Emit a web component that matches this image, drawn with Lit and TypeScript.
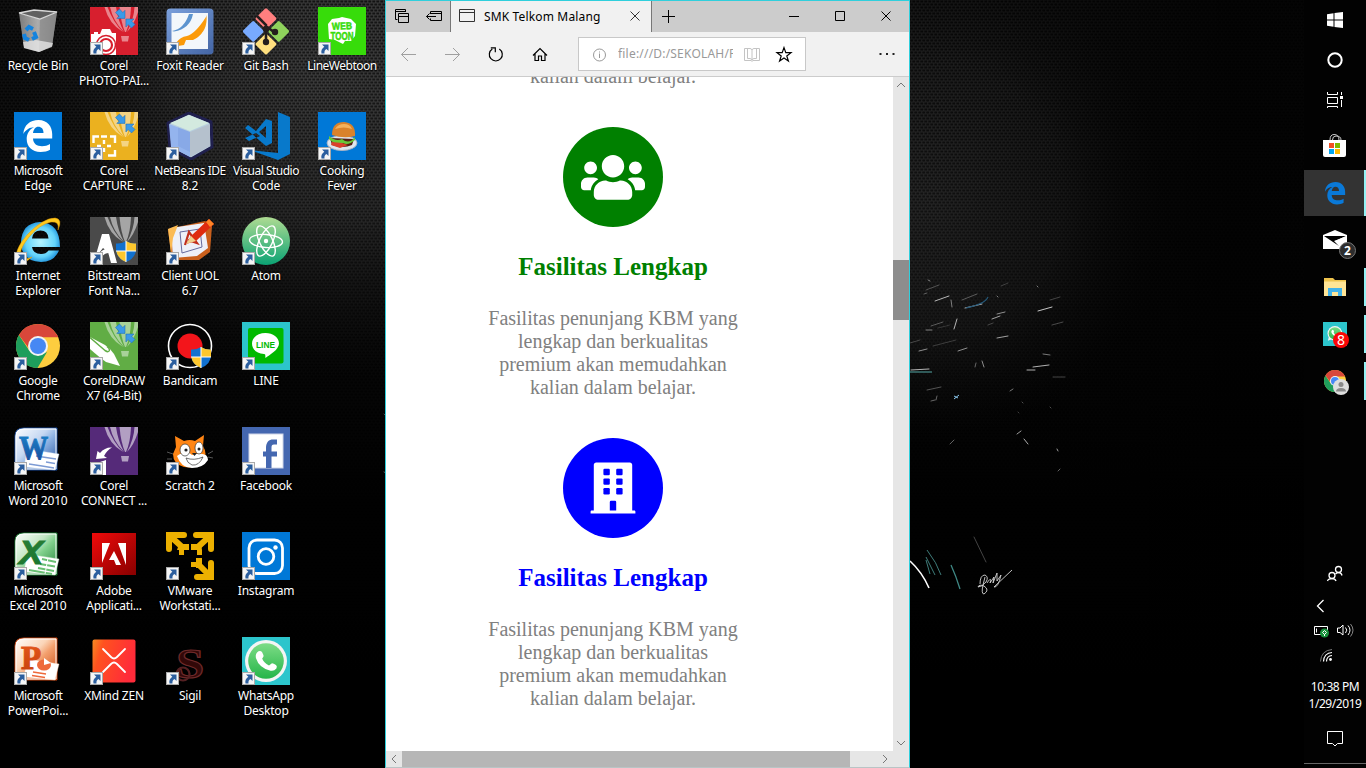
import { LitElement, html, svg, css, TemplateResult } from "lit";
import { customElement, property } from "lit/decorators.js";

const EDGE =
  "M9.3 22C10 13 16 8 24.5 8C33.5 8 38.2 14.5 38.2 22V26.5H19C19.3 32 23 34.2 28 34.2C31 34.2 33.5 33.5 36 32V37.8C33.5 39.2 30.5 40 26.5 40C18 40 12.7 34.5 12.7 27C12.7 22 15 17.5 20 15.2C15.5 15.2 11.5 18 9.3 22ZM19 21H29.5C29.5 17 27.5 14.8 24.2 14.8C21.5 14.8 19.5 17.5 19 21Z";

/* ---------- shared icon parts ---------- */

const tile = (color: string) => svg`<rect width="48" height="48" fill=${color} />`;

const balloon = (color: string, opacity = 0.5) => svg`
  <g fill=${color} fill-opacity=${opacity}>
    <path d="M14.5 0H17.5Q23 15 33 25Q19 17 14.5 0Z" />
    <path d="M20 0H26Q28 14 34 25Q23 14 20 0Z" />
    <path d="M29.5 0H41Q40.5 15 36 25H35Q31 16 29.5 0Z" />
    <path d="M44.5 0H48V5Q44 18 37 25Q44 12 44.5 0Z" />
    <path d="M31 29H39L38 34.5H32Z" />
  </g>`;

const compressArrows = svg`
  <g fill="#3a9ae8" stroke="#1669b5" stroke-width=".5">
    <path d="M25.500 5.500L29.500 2L32.800 5.500L35 3.300V11.400H26.800L29 9.200Z" />
    <path d="M45 17.500L41.500 21L38.200 17.600L35.900 20V12H44L41.700 14.200Z" />
  </g>`;

const shield = (x: number, y: number) => svg`
  <g transform="translate(${x} ${y})">
    <path d="M10 0Q15 3 20 2.500V8Q20 17 10 21Q0 17 0 8V2.500Q5 3 10 0Z" fill="#1171cf" />
    <path d="M10 0Q15 3 20 2.500V10H10ZM10 10V21Q1.500 17.500 .3 10Z" fill="#fdc72e" />
    <path d="M10 0V21M0 10H20" stroke="#fff" stroke-width="1" fill="none" />
  </g>`;

const chromeMark = svg`
  <circle cx="24" cy="24" r="22" fill="#fdcd3f" />
  <path d="M4.9 13A22 22 0 0 0 23.5 46L33 30L24 33.5L15.2 28.5Z" fill="#1e9e5c" />
  <path d="M4.9 13A22 22 0 0 1 43.1 13Q44 14 44.2 15.2H24L14.6 26Z" fill="#d8473a" />
  <circle cx="24" cy="24" r="10" fill="#f3f3f3" />
  <circle cx="24" cy="24" r="8" fill="#4688f4" />`;

const whatsMark = svg`
  <circle cx="24" cy="24" r="21" fill="#f4f5f4" />
  <path d="M4 45L7 33L15 41Z" fill="#f4f5f4" />
  <circle cx="24" cy="24" r="17.8" fill="url(#wa)" />
  <path d="M16.5 14.3Q18.5 13.2 20 15L21.5 18.3Q22 19.5 20.2 21.5Q21.5 25.5 27 28.5L29.6 26.4Q31 26 34 28Q35.5 29 34.4 31.5Q32 34.5 28.5 33.7Q17 31 13.9 21Q13 16.5 16.5 14.3Z" fill="#fff" />`;

const whatsGradient = svg`
  <linearGradient id="wa" x2="0" y2="1"><stop offset="0" stop-color="#7ddc86" /><stop offset="1" stop-color="#25b549" /></linearGradient>`;

const office = (id: string, c1: string, c2: string, c3: string, letter: string, ink: string, deco: TemplateResult) => svg`
  <linearGradient id=${id} x2="1" y2="1"><stop offset="0" stop-color="#fff" /><stop offset=".4" stop-color=${c2} /><stop offset=".55" stop-color=${c1} /><stop offset="1" stop-color=${c3} /></linearGradient>
  <linearGradient id=${id + "t"} x2="0" y2="1"><stop offset="0" stop-color=${ink} /><stop offset="1" stop-color=${c3} /></linearGradient>
  <path d="M1 9Q1 1 10 1H43V43H1Z" fill="url(#${id})" stroke=${c3} stroke-width="1" />
  <path d="M2 9.500Q2 2 10 2H42V42H2Z" fill="none" stroke="#fff" stroke-width="1" />
  <path d="M13 22L45 27L41 43L10 40Z" fill="#fff" stroke=${c2} stroke-width=".4" />
  ${deco}
  <text x=${letter === "P" ? 7 : 5} y="31.500" class=${letter === "X" ? "slant" : "heavy"} font-size="34" textLength=${letter === "P" ? 20 : letter === "W" ? 29 : 24} lengthAdjust="spacingAndGlyphs" fill="url(#${id + "t"})" stroke="url(#${id + "t"})" stroke-width="1">${letter}</text>`;

/* ---------- desktop icon art, 48 x 48 ---------- */

const art: Record<string, TemplateResult> = {
  recycle: svg`
    <linearGradient id="rb"><stop offset="0" stop-color="#8f8f8f" /><stop offset=".5" stop-color="#c9c9c9" /><stop offset="1" stop-color="#8a8a8a" /></linearGradient>
    <path d="M5 6L26 12L43 5L38 39L25 45L10 41Z" fill="url(#rb)" fill-opacity=".85" />
    <path d="M26 12L43 5L38 39L25 45Z" fill="#8c8c8c" fill-opacity=".75" />
    <path d="M5 6L20 3L43 5L26 12Z" fill="#606060" stroke="#d8d8d8" stroke-width="1.3" />
    <path d="M9 35L22 33L39 36L38 40L25 45L10 41Z" fill="#f0f0f0" fill-opacity=".7" />
    <g fill="none" stroke="#1583dd" stroke-width="4"><path d="M12 23L15 20L19 22" /><path d="M20 25L22 30L18 32" /><path d="M10 27L11 31L15 33" /></g>`,
  edge: svg`${tile("#0078d7")}<path d=${EDGE} fill="#fff" />`,
  ie: svg`
    <radialGradient id="ieg"><stop offset="0" stop-color="#b5f4ff" /><stop offset=".75" stop-color="#63d3fa" /><stop offset="1" stop-color="#2c9de0" /></radialGradient>
    <path d="M46 30H18Q19 37 27 37Q32 37 34.5 33.5H45Q40 45 27 45Q7 44 7 25Q8 6 26 5Q46 6 46 30ZM18 21.5H34.5Q34 13.5 26.5 13.5Q19 13.5 18 21.5Z" fill="url(#ieg)" />
    <path d="M3 44Q-1 34 13 18Q29 1 41 1Q49 2 44 13Q46 4 37 5Q26 7 15 20Q2 36 9 41Q12 43 18 40Q8 49 3 44Z" fill="#ffc91f" stroke="#e39a00" stroke-width=".5" />`,
  chrome: chromeMark,
  word: office("wd", "#8fb3e3", "#c6d8f2", "#184999", "W", "#1c8ad0", svg`<path d="M22 29L42 32M32 35L41 36.500M15 37L28 39M28 39L40 41" stroke="#7d9bd4" stroke-width="1.4" />`),
  excel: office("xl", "#7fd08b", "#c2e6c4", "#19772f", "X", "#2a7d36", svg`<path d="M28 27L42 30M26 32L41 34.500M24 36L40 39M15 38L38 42" stroke="#69bf73" stroke-width="2" /><path d="M34 26L31 42" stroke="#fff" stroke-width="1" />`),
  ppt: office("pp", "#f3a06e", "#fbd5b8", "#c5400b", "P", "#e8591c", svg`<ellipse cx="30" cy="28" rx="7" ry="5.500" fill="#ee6a3b" /><path d="M30 28V21L37 26Z" fill="#fff" /><path d="M19 35L32 37M18 38.500L31 40.500" stroke="#ee6a3b" stroke-width="1.6" />`),
  photo: svg`${tile("#d71f2e")}${balloon("#fff", 0.45)}${compressArrows}
    <path d="M1 27H4V25H8V27H10L12 22H20L22 26H26V48H1Z" fill="#fff" />
    <circle cx="16" cy="38" r="9.500" fill="#fff" stroke="#d71f2e" stroke-width="1.600" /><circle cx="16" cy="38" r="6" fill="none" stroke="#d71f2e" stroke-width="2.200" />`,
  capture: svg`${tile("#ebb11f")}${balloon("#fff", 0.45)}${compressArrows}
    <path d="M3.500 31V24.500H9M20 24.500H25V31M25 38V43.500H18M11 24.500H17M14 28V32M14 36V40M7 34H11M17 34H21" fill="none" stroke="#fff" stroke-width="2.400" />`,
  bitstream: svg`${tile("#4a4a4a")}${balloon("#fff", 0.5)}
    <path d="M5 41L12 17H19L27 46H21L18 35L13 31Z" fill="#fff" /><path d="M3 44Q10 32 19 31V36Q12 36 11 44Z" fill="#fff" />${shield(26, 24)}`,
  coreldraw: svg`${tile("#61ad45")}${balloon("#fff", 0.45)}${compressArrows}
    <path d="M0 15L15 23Q21 27 24 32L30 44L16 40Q9 35 0 27Z" fill="#fff" /><path d="M0 15.500L15 28.500Q19 31 19.500 28Q19.500 26.500 17 24.500" fill="none" stroke="#61ad45" stroke-width="1.500" />`,
  connect: svg`${tile("#552a79")}${balloon("#fff", 0.55)}
    <path d="M6 32L7.500 24L10 26Q15 20 22 20.500Q17 23 14 29L17 31Z" fill="#fff" /><path d="M10 35L16 33V48H10Z" fill="#fff" />`,
  adobe: svg`
    <linearGradient id="ad" x2="1" y2="1"><stop offset="0" stop-color="#f00a0a" /><stop offset="1" stop-color="#800" /></linearGradient>
    <rect x="2" y="1" width="44" height="42" fill="url(#ad)" /><path d="M12 11H20L12 31ZM28 11H36V33ZM24 19L31 33H26L24 28H19Z" fill="#fff" />`,
  xmind: svg`
    <linearGradient id="xm" x2="1" y2=".3"><stop offset="0" stop-color="#f68b22" /><stop offset=".25" stop-color="#ff521f" /><stop offset="1" stop-color="#ff2b3a" /></linearGradient>
    <rect x="2.500" y="2.500" width="43" height="43" rx="2" fill="url(#xm)" />
    <path d="M13 12L21 20Q24 23 27 20L35 12M13 35L21 27Q24 24 27 27L35 35" fill="none" stroke="#fff" stroke-width="1.800" stroke-linecap="round" />`,
  foxit: svg`
    <linearGradient id="fx" x2="1" y2="1"><stop offset="0" stop-color="#7ba0dc" /><stop offset="1" stop-color="#4365a5" /></linearGradient>
    <rect x=".5" y="1.500" width="47" height="46" rx="4" fill="url(#fx)" /><rect x="5.500" y="6" width="36.500" height="36" fill="#f3f7fb" />
    <path d="M6 24Q18 22 23 7H27Q24 22 8 24.500Z" fill="#5d94cf" /><path d="M28 30Q38 23 40.500 8Q42 24 30 31Z" fill="#f7a014" /><path d="M10 36Q14 30 21 29Q29 27 40 10Q39 28 27 33L20 33L18 38L12 39Z" fill="#fb9a0a" />`,
  netbeans: svg`
    <path d="M23 1L45 10L46 35L25 47L4 36L2 11Z" fill="#b8cfdf" stroke="#20204e" stroke-width="3" stroke-linejoin="round" />
    <path d="M3 12L24 20V45L5 35Z" fill="#94b4ee" /><path d="M24 20L44 12V34L24 45Z" fill="#b5c1cd" /><path d="M4 11L23 3L43 11L24 19Z" fill="#d3eadf" /><path d="M12 15.500L24 20V40L12 34Z" fill="#7599dd" fill-opacity=".4" />`,
  uol: svg`
    <path d="M2 12L39 4L46 9L44 35L33 43L6 43Z" fill="#c95f1c" /><path d="M5 11L38 6L42 31L31 39L7 41Z" fill="#eef0f8" /><path d="M2 12L12 8L7 21L5 37Z" fill="#fbbb54" />
    <path d="M14 15L34 12L36 30L16 36Z" fill="none" stroke="#666b9e" stroke-width="1" /><path d="M19 28L23 15L31 26L22 23" fill="none" stroke="#c02f1d" stroke-width="2.200" />
    <path d="M25 19L43 2L48 7L30 24L20 27Z" fill="#df2b0f" /><path d="M40 5L43 2L48 7L44 10Z" fill="#ff8426" /><path d="M25 19L30 24L20 27Z" fill="#efcf8c" />`,
  bandicam: svg`
    <circle cx="24" cy="24" r="21.500" fill="#050505" stroke="#fff" stroke-width="1.600" /><circle cx="24" cy="24" r="12.500" fill="#f3151b" />${shield(25, 25)}`,
  scratch: svg`
    <path d="M10 20L9 9L18 14Q24 12 29 14L38 8L37 19Q42 27 37 34Q31 42 18 40Q7 37 7 27Z" fill="#ff8514" />
    <path d="M11 29Q21 22 26 28Q42 24 42 33Q37 41 26 41Q15 41 11 29Z" fill="#fff" />
    <ellipse cx="19" cy="23" rx="5" ry="6" fill="#fff" stroke="#333" stroke-width=".7" /><ellipse cx="33" cy="21" rx="4" ry="6" fill="#fff" stroke="#333" stroke-width=".7" />
    <circle cx="20" cy="23" r="1.600" fill="#222" /><circle cx="33" cy="22" r="1.500" fill="#222" /><path d="M26 26H31L28.500 29Z" fill="#222" />
    <path d="M20 31Q28 34 37 30Q33 39 26 38Q21 36 20 31Z" fill="#fff" stroke="#333" stroke-width=".7" /><path d="M1 25L7 27M1 32H6M47 24L42 27M47 31L42 30" stroke="#555" />`,
  vmware: svg`<g fill="none" stroke="#ecb000" stroke-linecap="round" stroke-width="6">
      <path d="M3 17V3H18M3 3L15 14M45 17V3H30M45 3L33 14M45 31V45H31M45 45L33 33" /></g>
    <path d="M13 12H23V18H18V23H13V18H11ZM25 12H35L36 18V23H31V18H25ZM25 30H30V26H36V36H30V35H25Z" fill="#ecb000" />`,
  sigil: svg`<text x="10" y="41" class="ornate" font-size="42" textLength="28" lengthAdjust="spacingAndGlyphs" fill="#320808" stroke="#6e2a2a" stroke-width="1.100">S</text>
    <circle cx="17" cy="37" r="6.500" fill="none" stroke="#552022" stroke-width="2.200" />`,
  git: svg`
    <g transform="rotate(45 24 24)"><rect x="7.500" y="7.500" width="15.500" height="15.500" rx="1.500" fill="#ff7f7f" /><rect x="25.500" y="7.500" width="15.500" height="15.500" rx="1.500" fill="#8fd35c" /><rect x="7.500" y="25.500" width="15.500" height="15.500" rx="1.500" fill="#78aaff" /><rect x="25.500" y="25.500" width="15.500" height="15.500" rx="1.500" fill="#ffe07f" /></g>
    <path d="M15 9L24 18V34M25 20L32 25" fill="none" stroke="#231d1d" stroke-width="2.600" /><circle cx="24" cy="22" r="3.200" fill="#231d1d" /><circle cx="33" cy="25" r="3.200" fill="#231d1d" /><circle cx="24" cy="35" r="3.200" fill="#231d1d" />`,
  vscode: svg`<g fill="#0879cb"><path d="M36 0L48 5V42L36 48L8 38L36 41Z" /><path fill-rule="evenodd" d="M24 7L30 9V31L24 34L3 16L6 13L14 19ZM24 14L17 20L24 26ZM14 21L18 24L7 29L3 26Z" /></g>`,
  atom: svg`
    <linearGradient id="at" x2="0" y2="1"><stop offset="0" stop-color="#aedb92" /><stop offset="1" stop-color="#0ba374" /></linearGradient>
    <circle cx="24" cy="24" r="24" fill="url(#at)" /><g fill="none" stroke="#fff" stroke-width="1.400"><ellipse cx="24" cy="24" rx="16.500" ry="6.500" transform="rotate(4 24 24)" /><ellipse cx="24" cy="24" rx="16.500" ry="6.500" transform="rotate(64 24 24)" /><ellipse cx="24" cy="24" rx="16.500" ry="6.500" transform="rotate(116 24 24)" /></g><circle cx="24" cy="24" r="2.200" fill="#fff" />`,
  line: svg`${tile("#2cc5cc")}<rect x="6" y="6" width="35.500" height="35.500" rx="2" fill="#00b900" />
    <path d="M23.500 11C31 11 37 15.500 37 21.500C37 28 27 33 23.500 36C23 34 24 32 22 32C14 31 10 27 10 21.500C10 15.500 16 11 23.500 11Z" fill="#fff" />
    <text x="14" y="25.500" class="bold" font-size="9" textLength="19" lengthAdjust="spacingAndGlyphs" fill="#00b900">LINE</text>`,
  facebook: svg`${tile("#4467b0")}<rect x="7" y="7" width="34" height="34" fill="#fff" /><rect x="7" y="7" width="34" height="34" fill="none" stroke="#cfd6e8" />
    <path d="M24 41V29.500H21V24.500H24V21C24 15 27 12.500 31 12.500H35V17.500H32C30 17.500 29.500 18.500 29.500 20.500V24.500H35V29.500H29.500V41Z" fill="#4467b0" />`,
  instagram: svg`${tile("#0078d7")}<rect x="7" y="8" width="33.500" height="33.500" rx="8" fill="none" stroke="#fff" stroke-width="2.800" /><circle cx="24" cy="24.500" r="7.800" fill="none" stroke="#fff" stroke-width="2.800" /><circle cx="33.500" cy="15.500" r="2.200" fill="#fff" />`,
  whatsapp: svg`${whatsGradient}${tile("#2cc5cc")}${whatsMark}`,
  webtoon: svg`${tile("#37dc0a")}
    <path d="M14 12L21 11L24 10L33 12L38 17L37 29L33 34L27 34L25 37L17 33L11 32L10 17Z" fill="#fff" />
    <g class="bold" fill="#37dc0a" stroke="#37dc0a" stroke-width=".5"><text x="14" y="22.500" font-size="10" textLength="20" lengthAdjust="spacingAndGlyphs" transform="rotate(-2 24 20)">WEB</text><text x="12.500" y="32.500" font-size="10.500" textLength="23" lengthAdjust="spacingAndGlyphs">TOON</text></g>`,
  cooking: svg`${tile("#0078d7")}
    <ellipse cx="24" cy="31" rx="15" ry="7.500" fill="#dfe6ee" stroke="#a8b3c6" /><path d="M12 26L36 27L34 33Q25 37 14 33Z" fill="#542016" />
    <path d="M11 24Q18 30 24 27Q31 33 37 25L37 28Q30 34 25 31Q18 34 11 27Z" fill="#68c738" /><path d="M14 30L24 31L30 33L22 36L13 33Z" fill="#d9412b" />
    <path d="M14 23Q14 10 26 10Q38 11 37 24Q26 27 14 23Z" fill="#d9822b" /><path d="M17 17Q20 12 26 12Q32 12 34 17Q26 14 17 17Z" fill="#f3b15d" />`,
};

interface Shortcut {
  icon: string;
  lines: string[];
  plain?: boolean;
}

const columns: Shortcut[][] = [
  [
    { icon: "recycle", lines: ["Recycle Bin"], plain: true },
    { icon: "edge", lines: ["Microsoft", "Edge"] },
    { icon: "ie", lines: ["Internet", "Explorer"] },
    { icon: "chrome", lines: ["Google", "Chrome"] },
    { icon: "word", lines: ["Microsoft", "Word 2010"] },
    { icon: "excel", lines: ["Microsoft", "Excel 2010"] },
    { icon: "ppt", lines: ["Microsoft", "PowerPoi..."] },
  ],
  [
    { icon: "photo", lines: ["Corel", "PHOTO-PAI..."] },
    { icon: "capture", lines: ["Corel", "CAPTURE ..."] },
    { icon: "bitstream", lines: ["Bitstream", "Font Na..."] },
    { icon: "coreldraw", lines: ["CorelDRAW", "X7 (64-Bit)"] },
    { icon: "connect", lines: ["Corel", "CONNECT ..."] },
    { icon: "adobe", lines: ["Adobe", "Applicati..."] },
    { icon: "xmind", lines: ["XMind ZEN"] },
  ],
  [
    { icon: "foxit", lines: ["Foxit Reader"] },
    { icon: "netbeans", lines: ["NetBeans IDE", "8.2"] },
    { icon: "uol", lines: ["Client UOL", "6.7"] },
    { icon: "bandicam", lines: ["Bandicam"] },
    { icon: "scratch", lines: ["Scratch 2"] },
    { icon: "vmware", lines: ["VMware", "Workstati..."] },
    { icon: "sigil", lines: ["Sigil"] },
  ],
  [
    { icon: "git", lines: ["Git Bash"] },
    { icon: "vscode", lines: ["Visual Studio", "Code"] },
    { icon: "atom", lines: ["Atom"] },
    { icon: "line", lines: ["LINE"] },
    { icon: "facebook", lines: ["Facebook"] },
    { icon: "instagram", lines: ["Instagram"] },
    { icon: "whatsapp", lines: ["WhatsApp", "Desktop"] },
  ],
  [
    { icon: "webtoon", lines: ["LineWebtoon"] },
    { icon: "cooking", lines: ["Cooking", "Fever"] },
  ],
];

const tight = new Set(["NetBeans IDE", "Visual Studio", "LineWebtoon", "Microsoft"]);

@customElement("desktop-icons")
export class DesktopIcons extends LitElement {
  static styles = css`
    :host { display: flex; font: 12px/15px "Noto Sans", "Open Sans", sans-serif; letter-spacing: -0.22px; color: #fff; }
    .column { width: 76px; display: flex; flex-direction: column; }
    .cell { height: 105px; box-sizing: border-box; padding-top: 7px; display: flex; flex-direction: column; align-items: center; }
    .art { width: 48px; height: 48px; display: block; margin-bottom: 3px; }
    .label { white-space: nowrap; text-shadow: 0 1px 2px #000, 0 0 2px #000; }
    .tight { letter-spacing: -0.5px; }
    .heavy { font-family: "Liberation Serif", serif; font-weight: bold; }
    .slant { font-family: "Liberation Sans", sans-serif; font-weight: bold; font-style: italic; }
    .bold { font-family: "Liberation Sans", sans-serif; font-weight: bold; letter-spacing: 0; }
    .ornate { font-family: "Liberation Serif", serif; font-weight: bold; }
  `;

  render() {
    return columns.map(
      (items) => html`<div class="column">
        ${items.map(
          (item) => html`<div class="cell">
            <svg class="art" viewBox="0 0 48 48">
              ${art[item.icon]}
              ${item.plain
                ? null
                : svg`<rect x=".5" y="35.500" width="12" height="12" fill="#f5f5f5" stroke="#a9a9a9" />
                    <path d="M4 37.500H10.500V44L8.500 42Q6 43 6.500 46.500H3.500Q2.500 42.500 6.300 39.800Z" fill="#2b5e9e" />`}
            </svg>
            ${item.lines.map((line) => html`<span class="label ${tight.has(line) ? "tight" : ""}">${line}</span>`)}
          </div>`
        )}
      </div>`
    );
  }
}

/* ---------- web page shown in the browser ---------- */

@customElement("facility-card")
export class FacilityCard extends LitElement {
  @property() color = "green";
  @property() icon = "";

  static styles = css`
    :host { display: flex; flex-direction: column; align-items: center; height: 311px; font: 20px/23px "Liberation Serif", serif; text-align: center; color: gray; }
    .disc { width: 100px; height: 100px; border-radius: 50%; }
    .disc.green { background: green; }
    .disc.blue { background: blue; }
    .title { font-size: 25px; line-height: 29px; font-weight: bold; margin: 25px 0 26px; white-space: nowrap; }
    .title.green { color: green; }
    .title.blue { color: blue; }
    .text { white-space: pre-line; margin: 0; }
    svg { display: block; }
  `;

  render() {
    return html`<div class="disc ${this.color}">
        <svg viewBox="0 0 1000 1000">
          ${this.icon === "users"
            ? svg`<path transform="translate(180 248)" fill="#fff" d="M96 224c35.300 0 64-28.700 64-64s-28.700-64-64-64-64 28.700-64 64 28.700 64 64 64zm448 0c35.300 0 64-28.700 64-64s-28.700-64-64-64-64 28.700-64 64 28.700 64 64 64zm32 32h-64c-17.600 0-33.500 7.100-45.100 18.600 40.300 22.100 68.900 62 75.100 109.400h66c17.700 0 32-14.300 32-32v-32c0-35.300-28.700-64-64-64zm-256 0c61.900 0 112-50.100 112-112S381.900 32 320 32 208 82.100 208 144s50.100 112 112 112zm76.800 32h-8.300c-20.800 10-43.900 16-68.500 16s-47.600-6-68.500-16h-8.300C179.600 288 128 339.600 128 403.200V432c0 26.500 21.500 48 48 48h288c26.500 0 48-21.500 48-48v-28.800c0-63.600-51.600-115.200-115.200-115.200zm-223.700-13.400C161.500 263.100 145.600 256 128 256H64c-35.300 0-64 28.700-64 64v32c0 17.700 14.300 32 32 32h65.900c6.300-47.400 34.900-87.300 75.200-109.400z" />`
            : svg`<g transform="translate(276 244)">
                <path fill="#fff" d="M436 480h-20V24c0-13-11-24-24-24H56C43 0 32 11 32 24v456H12c-7 0-12 5-12 12v20h448v-20c0-7-5-12-12-12z" />
                <g fill="blue">${[64, 160, 256].map((y) => svg`<rect x="128" y=${y} width="64" height="64" rx="12" /><rect x="256" y=${y} width="64" height="64" rx="12" />`)}
                <path d="M192 480V396q0-12 12-12h40q12 0 12 12v84z" /></g></g>`}
        </svg>
      </div>
      <h2 class="title ${this.color}">Fasilitas Lengkap</h2>
      <p class="text">Fasilitas penunjang KBM yang
lengkap dan berkualitas
premium akan memudahkan
kalian dalam belajar.</p>`;
  }
}

@customElement("browser-window")
export class BrowserWindow extends LitElement {
  static styles = css`
    :host { display: flex; flex-direction: column; box-sizing: border-box; border: 1px solid #2fcfdc; border-bottom-color: #b9c4c5; background: #f1f1f1; font: 12px/16px "Noto Sans", "Open Sans", sans-serif; color: #000; overflow: hidden; }
    svg { display: block; fill: none; stroke: currentColor; flex: none; }
    .tabs { height: 31px; background: #ccc; display: flex; }
    .set-aside { width: 64px; display: flex; align-items: center; }
    .tab { width: 202px; box-sizing: border-box; border-left: 1px solid #777; border-right: 1px solid #777; background: #f1f1f1; display: flex; align-items: center; }
    .tab-title { flex: 1; padding-left: 8px; letter-spacing: 0.15px; white-space: nowrap; }
    .spacer { flex: 1; }
    .tools { height: 44px; display: flex; align-items: center; border-bottom: 1px solid #ccc; }
    .address { width: 228px; height: 34px; margin-left: 26px; box-sizing: border-box; border: 1px solid #c8c8c8; background: #fff; display: flex; align-items: center; }
    .url { width: 115px; margin: 0 2px 0 11px; overflow: hidden; white-space: nowrap; color: #999; letter-spacing: 0.2px; }
    .view { flex: 1; display: flex; min-height: 0; }
    .page { flex: 1; background: #fff; overflow: hidden; display: flex; flex-direction: column; }
    .cards { width: 454px; flex: none; }
    .scrolled { margin: -12px 0 39px; font: 20px/23px "Liberation Serif", serif; color: gray; text-align: center; }
    .vbar { width: 16px; background: #e6e6e6; color: #777; display: flex; flex-direction: column; }
    .vtrack { flex: 1; padding-top: 167px; }
    .vthumb { height: 60px; background: #8d8d8d; }
    .hbar { height: 16px; background: #e6e6e6; color: #777; display: flex; padding-right: 16px; }
    .htrack { flex: 1; }
    .hthumb { width: 448px; height: 16px; background: #b6b6b6; }
  `;

  render() {
    return html`
      <div class="tabs">
        <div class="set-aside">
          <svg width="64" height="31" viewBox="386 1 64 31">
            <path d="M397.500 19.500H395.500V9.500H405.500V12M395.500 11.500H405.500M398.500 13.500H408.500V22.500H398.500ZM398.500 16.500H408.500" />
            <path d="M430.500 14V11.500H441.500V20.500H430.500V18.500M430 13.500H441.500M426.500 16.500H436M429.500 13.500L426.500 16.500L429.500 19.500" />
          </svg>
        </div>
        <div class="tab">
          <svg width="25" height="31" viewBox="451 1 25 31" color="#333"><path d="M459.500 9.500H474.500V21.500H459.500ZM459.500 12.500H474.500" /></svg>
          <span class="tab-title">SMK Telkom Malang</span>
          <svg width="21" height="31" viewBox="630 1 21 31" color="#333"><path d="M630.500 11.500L639.500 20.500M639.500 11.500L630.500 20.500" /></svg>
        </div>
        <svg width="36" height="31" viewBox="652 1 36 31"><path d="M668.500 10V23M662 16.500H675" /></svg>
        <div class="spacer"></div>
        <svg width="129" height="31" viewBox="780 1 129 31"><path d="M789 16.500H799M835.500 11.500H844.500V20.500H835.500ZM881.500 11.500L890.500 20.500M890.500 11.500L881.500 20.500" /></svg>
      </div>
      <div class="tools">
        <svg width="166" height="44" viewBox="386 32 166 44">
          <path d="M401.500 54.500H416M408 48L401.500 54.500L408 61M445 54.500H459.500M453 48L459.500 54.500L453 61" stroke="#a0a0a0" />
          <path d="M499.500 48.700A6.500 6.500 0 1 1 492.500 48.700M491 47.500H495.500V52" stroke-width="1.200" transform="translate(-.2 .3)" />
          <path d="M533 55.500L540 48.500L547 55.500M535 54V60.500H538.500V56H541.500V60.500H545V54" stroke-width="1.200" />
        </svg>
        <div class="address">
          <svg width="28" height="32" viewBox="579 38 28 32" color="#999"><circle cx="599.500" cy="55" r="6" /><path d="M599.500 53.500V58M599.500 51.500V52.500" /></svg>
          <span class="url">file:///D:/SEKOLAH/F</span>
          <svg width="70" height="32" viewBox="735 38 70 32">
            <path d="M744.500 48.500H750Q751.500 48.500 752 50Q752.500 48.500 754 48.500H759.500V60.500H753L752 61.500L751 60.500H744.500ZM752 50V61M747.500 48.500V58.500H750Q752 59 752 60M756.500 48.500V58.500H754Q752 59 752 60" stroke="#c4c4c4" />
            <path d="M784 47.600L785.800 52.700H791L786.800 56L788.400 61L784 58L779.600 61L781.200 56L777 52.700H782.200Z" stroke-width="1.200" />
          </svg>
        </div>
        <div class="spacer"></div>
        <svg width="40" height="44" viewBox="869 32 40 44"><path d="M879.500 54H881.500M886 54H888M892.500 54H894.500" stroke-width="2" stroke="#222" /></svg>
      </div>
      <div class="view">
        <div class="page">
          <div class="cards">
            <p class="scrolled">kalian dalam belajar.</p>
            <facility-card color="green" icon="users"></facility-card>
            <facility-card color="blue" icon="building"></facility-card>
          </div>
        </div>
        <div class="vbar">
          <svg width="16" height="16"><path d="M4 10L8 6L12 10" /></svg>
          <div class="vtrack"><div class="vthumb"></div></div>
          <svg width="16" height="16"><path d="M4 6L8 10L12 6" /></svg>
        </div>
      </div>
      <div class="hbar">
        <svg width="16" height="16"><path d="M10 4L6 8L10 12" /></svg>
        <div class="htrack"><div class="hthumb"></div></div>
        <svg width="16" height="16"><path d="M6 4L10 8L6 12" /></svg>
      </div>
    `;
  }
}

/* ---------- taskbar ---------- */

@customElement("task-bar")
export class TaskBar extends LitElement {
  static styles = css`
    :host { display: flex; flex-direction: column; background: #020202; color: #fff; font: 12px/17px "Noto Sans", "Open Sans", sans-serif; letter-spacing: -0.45px; }
    svg { display: block; flex: none; }
    .system { height: 40px; }
    .apps { margin-top: 3px; }
    .app { height: 47px; display: flex; }
    .active { background: #333; height: 46px; margin-bottom: 1px; }
    .open::after { content: ""; width: 2px; height: 38px; margin-top: 4px; background: #93f1f4; }
    .active::after { content: ""; width: 2px; height: 46px; background: #93f1f4; }
    .spacer { flex: 1; }
    .clock { text-align: center; white-space: nowrap; height: 34px; }
    .base { height: 1px; background: #666; margin-bottom: 4px; }
    .count { font: bold 12px "Noto Sans", sans-serif; letter-spacing: 0; }
    .count8 { font: 14px "Noto Sans", sans-serif; letter-spacing: 0; }
  `;

  render() {
    return html`
      <svg class="system" width="62" height="40" viewBox="0 0 62 40"><path d="M23 14.300L29.500 13.300V19.500H23ZM30.500 13.100L39 12V19.500H30.500ZM23 20.500H29.500V26.700L23 25.700ZM30.500 20.500H39V28L30.500 26.900Z" fill="#fff" /></svg>
      <svg class="system" width="62" height="40" viewBox="0 0 62 40"><circle cx="31" cy="20" r="6.700" fill="none" stroke="#fff" stroke-width="2" /></svg>
      <svg class="system" width="62" height="40" viewBox="0 0 62 40"><path d="M23.500 12V14.500H33.500V12M23.500 17.500H33.500V23.500H23.500ZM23.500 28V26.500H33.500V28M37.500 12V15M37.500 20V27" fill="none" stroke="#fff" /><rect x="36" y="16" width="3" height="3" fill="#fff" /></svg>
      <div class="apps">
        <div class="app"><svg width="60" height="47" viewBox="0 123 60 47">
          <path d="M19 140H42V155Q42 157 40 157H21Q19 157 19 155Z" fill="#fff" /><path d="M26 140Q26 134.500 30 134.500Q35 134.500 35 140M28.500 140Q28.500 136 32 136Q37 136 37 140" fill="none" stroke="#ccc" />
          <path d="M25 143H30V148H25Z" fill="#f25022" /><path d="M31 143H36V148H31Z" fill="#7fba00" /><path d="M25 149H30V154H25Z" fill="#00a4ef" /><path d="M31 149H36V154H31Z" fill="#ffb900" />
        </svg></div>
        <div class="app active"><svg width="60" height="46" viewBox="0 0 60 46"><path transform="translate(14.400 6.400) scale(.7)" d=${EDGE} fill="#0a79d8" /></svg></div>
        <div class="app"><svg width="62" height="47" viewBox="0 217 62 47">
          <path d="M19 235L31 230L43 235V249H19Z" fill="#fff" /><path d="M20 236L42 236L31 241L35 246Z" fill="#020202" /><path d="M30 241L43 236V248L35 246Z" fill="#fff" />
          <circle cx="43.500" cy="250.500" r="8" fill="#2d2d2d" stroke="#777" /><text class="count" x="40" y="255" fill="#fff">2</text>
        </svg></div>
        <div class="app open"><svg width="60" height="47" viewBox="0 264 60 47">
          <path d="M20 278H29L31 280H42V296H20Z" fill="#eec34d" /><path d="M20 281.500H42V296H20Z" fill="#ffe596" /><path d="M24 288H38V296H34V292H28V296H24Z" fill="#42b3ea" />
        </svg></div>
        <div class="app open"><svg width="60" height="47" viewBox="0 311 60 47">
          ${whatsGradient}
          <rect x="19" y="322" width="24" height="24" fill="#2cc5cc" /><g transform="translate(22.500 325) scale(.35)">${whatsMark}</g>
          <circle cx="37" cy="340" r="8" fill="#fb0505" /><text class="count8" x="33" y="345" fill="#fff">8</text>
        </svg></div>
        <div class="app open"><svg width="60" height="47" viewBox="0 358 60 47">
          <g transform="translate(19 369) scale(.5)">${chromeMark}</g>
          <circle cx="37" cy="387" r="8" fill="#dedede" /><circle cx="37" cy="384.500" r="2.500" fill="#8a8a8a" /><path d="M32 391.500Q32 388 37 388Q42 388 42 391.500Z" fill="#8a8a8a" />
        </svg></div>
      </div>
      <div class="spacer"></div>
      <svg width="62" height="118" viewBox="0 560 62 118" fill="none" stroke="#fff">
        <g stroke-width="1.300"><circle cx="28" cy="575.500" r="3" /><path d="M23.500 581Q24 578.600 28 578.600Q31.500 578.600 32 581" /><circle cx="34.500" cy="569.500" r="3" /><path d="M31.500 574Q33 572.600 35 572.700Q37.500 573 38 575.500" /></g>
        <path d="M19.500 600L13.500 606L19.500 612" stroke-width="1.300" />
        <path d="M10.500 626.500H23.500V634.500H10.500ZM12.500 628.500V632.500" /><circle cx="20.500" cy="633" r="4.500" fill="#16913a" stroke="none" /><path d="M20.500 636V634M20.500 630.500L22.500 632.500L20.500 634.500L18.500 632.500Z" />
        <path d="M33.500 628H36L39 625V635L36 632.500H33.500ZM41.500 627.500Q44 630 41.500 633M44 625.500Q48 630 44 635" /><path d="M46.500 624Q51.500 630 46.500 636.500" stroke="#888" />
        <circle cx="26.500" cy="659.500" r="1.400" fill="#fff" stroke="none" /><path d="M22.500 661.500Q22.500 656 28 655.500M19.500 661.500Q20 653 28 652.500" stroke-width="1.200" /><path d="M16.500 661.500Q17 650.500 28 649.500" stroke="#777" />
      </svg>
      <div class="clock">10:38 PM<br />1/29/2019</div>
      <svg width="62" height="51" viewBox="0 712 62 51" fill="none" stroke="#fff"><path d="M23.500 731.500H38.500V743.500H33.500L31 746L28.500 743.500H23.500Z" /></svg>
      <div class="base"></div>
    `;
  }
}

/* ---------- wallpaper and layout ---------- */

// x1, y1, x2, y2, opacity
const shards: number[][] = [
  [926, 290, 939, 285, 0.35], [935, 301, 949, 296, 0.9], [951, 300, 952, 307, 0.6], [962, 300, 977, 294, 0.4], [965, 308, 982, 304, 0.9],
  [997, 296, 998, 297, 0.6], [1001, 286, 1008, 283, 0.25], [992, 319, 1000, 316, 0.8], [997, 314, 1005, 312, 0.7], [1038, 311, 1052, 307, 1],
  [1050, 300, 1060, 297, 0.3], [1052, 325, 1063, 322, 0.35], [957, 319, 954, 329, 0.9], [926, 330, 932, 330, 0.6], [931, 326, 943, 322, 0.4],
  [938, 328, 950, 325, 0.2], [910, 343, 920, 340, 0.3], [919, 351, 927, 349, 0.7], [933, 346, 956, 340, 0.25], [958, 351, 967, 348, 0.7],
  [997, 338, 1008, 336, 0.8], [976, 363, 975, 367, 0.5], [982, 361, 984, 367, 0.7], [1043, 354, 1050, 355, 0.6], [1027, 370, 1035, 370, 0.9],
  [1033, 367, 1049, 365, 0.9], [1053, 377, 1065, 377, 0.35], [911, 370, 929, 369, 0.9], [927, 390, 941, 387, 0.4], [931, 401, 935, 400, 0.5],
  [936, 400, 937, 396, 0.5], [1010, 391, 1013, 389, 0.6], [950, 444, 954, 440, 0.5], [1017, 434, 1021, 431, 0.8], [1024, 439, 1028, 444, 0.9],
  [1057, 449, 1058, 451, 0.8], [1058, 471, 1060, 469, 0.5], [1050, 407, 1051, 408, 0.4], [1022, 402, 1023, 403, 0.4], [928, 280, 930, 281, 0.6],
  [924, 294, 927, 293, 0.4], [1037, 286, 1038, 287, 0.6], [988, 325, 993, 323, 0.3], [974, 537, 986, 562, 0.35], [1018, 412, 1019, 413, 0.3],
  [384, 414, 386, 416, 0.4], [384, 472, 386, 473, 0.5],
];

@customElement("app-root")
export class AppRoot extends LitElement {
  static styles = css`
    :host { display: block; position: relative; width: 1366px; height: 768px; overflow: hidden; background: #000; }
    .wallpaper { position: absolute; inset: 0; }
    .icons { position: absolute; left: 0; top: 0; }
    .browser { position: absolute; left: 385px; top: 0; width: 525px; height: 768px; }
    .taskbar { position: absolute; right: 0; top: 0; width: 62px; height: 768px; }
  `;

  render() {
    return html`
      <svg class="wallpaper" width="1366" height="768">
        <defs>
          <pattern id="mesh" width="4" height="6" patternUnits="userSpaceOnUse">
            <rect width="4" height="6" fill="#fff" fill-opacity=".09" />
            <rect x=".3" y=".5" width="2.900" height="2" fill="#000" fill-opacity=".75" />
            <rect x="2.300" y="3.500" width="1.700" height="2" fill="#000" fill-opacity=".75" /><rect y="3.500" width="1.200" height="2" fill="#000" fill-opacity=".75" />
          </pattern>
          <radialGradient id="left" gradientUnits="userSpaceOnUse" cx="330" cy="60" r="350"><stop offset="0" stop-color="#343434" /><stop offset=".45" stop-color="#1f1f1f" /><stop offset="1" stop-color="#000" stop-opacity="0" /></radialGradient>
          <radialGradient id="right" gradientUnits="userSpaceOnUse" cx="930" cy="200" r="270"><stop offset="0" stop-color="#1b1b1b" /><stop offset=".5" stop-color="#111" /><stop offset="1" stop-color="#000" stop-opacity="0" /></radialGradient>
          <linearGradient id="fade" x2="0" y2="1"><stop offset="0" stop-color="#ddd" /><stop offset=".3" stop-color="#999" /><stop offset=".65" stop-color="#111" /><stop offset="1" stop-color="#000" /></linearGradient>
          <mask id="meshMask"><rect width="1366" height="768" fill="url(#fade)" /></mask>
          <linearGradient id="shade"><stop offset="0" stop-color="#000" stop-opacity="0" /><stop offset=".35" stop-color="#000" stop-opacity=".25" /><stop offset=".7" stop-color="#000" stop-opacity=".75" /><stop offset="1" stop-color="#000" stop-opacity=".7" /></linearGradient>
        </defs>
        <rect width="386" height="768" fill="url(#left)" />
        <rect x="909" width="457" height="768" fill="url(#right)" />
        <rect width="1366" height="768" fill="url(#mesh)" mask="url(#meshMask)" />
        <rect x="909" width="457" height="768" fill="url(#shade)" />
        <g stroke-linecap="round" stroke-width=".9" opacity=".85">
          ${shards.map(([x1, y1, x2, y2, o]) => svg`<line x1=${x1} y1=${y1} x2=${x2} y2=${y2} stroke="#fff" stroke-opacity=${o} />`)}
        </g>
        <g fill="none">
          <path d="M966 308Q985 304 988 297" stroke="#25597a" stroke-width="1.200" /><path d="M910 372H932" stroke="#3c7473" stroke-width="1.500" /><path d="M954 399L959 395M954 396L958 398" stroke="#8ac7ed" />
          <path d="M910 561Q922 572 929 588" stroke="#fff" stroke-width="1.600" /><path d="M927 550Q937 563 941 575M926 557L935 575M926 560L930 574" stroke="#3f7d7b" /><path d="M951 565Q956 576 960 589" stroke="#3f8885" stroke-width="1.300" />
          <path d="M980 584Q980 575 985 575Q989 577 986 582Q982 587 978 587Q979 584 984 586Q990 590 984 594Q981 594 983 585L985 577M987 583Q990 578 991 580L990 583L994 577L993 583L997 573L997 581L1001 575Q998 588 994 587L1012 570" stroke="#d5d5d5" stroke-width=".9" />
        </g>
      </svg>
      <desktop-icons class="icons"></desktop-icons>
      <browser-window class="browser"></browser-window>
      <task-bar class="taskbar"></task-bar>
    `;
  }
}
